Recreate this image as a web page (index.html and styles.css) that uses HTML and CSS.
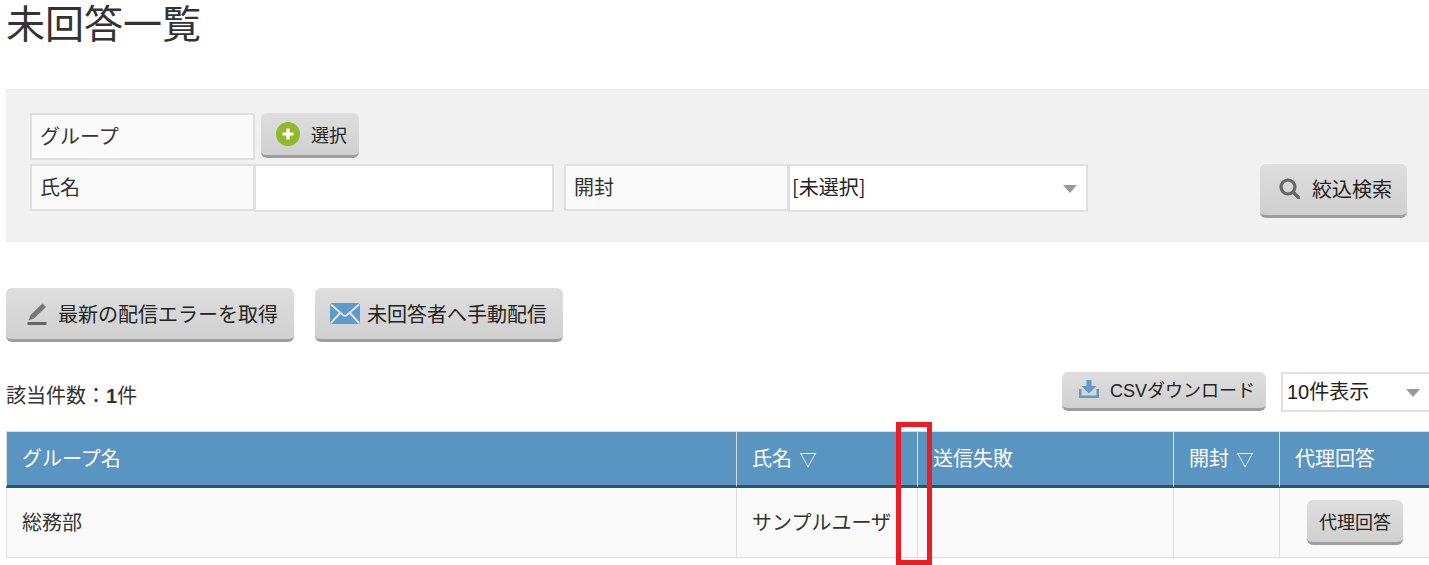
FILE: index.html
```html
<!DOCTYPE html>
<html lang="ja">
<head>
    <meta charset="UTF-8">
    <title>未回答一覧</title>
    <link rel="stylesheet" href="styles.css">
</head>
<body>
    <div class="page">
        <h1 class="page-title">未回答一覧</h1>

        <form class="search-panel">
            <div class="search-row">
                <div class="field-label">グループ</div>
                <button type="button" class="btn btn-select">
                    <svg class="icon" width="24" height="24" viewBox="0 0 24 24"><circle cx="12" cy="12" r="12" fill="#93b82a"/><path d="M12 6.500v11M6.500 12h11" stroke="#fff" stroke-width="3.200"/></svg>
                    選択
                </button>
            </div>
            <div class="search-row">
                <div class="field-label">氏名</div>
                <input type="text" class="field-input">
                <div class="field-label field-label-gap">開封</div>
                <div class="select-wrap select-open">
                    <select class="field-select"><option>[未選択]</option></select>
                </div>
                <button type="button" class="btn btn-search">
                    <svg class="icon" width="21" height="21" viewBox="0 0 21 21"><circle cx="9" cy="9" r="7" fill="none" stroke="#666" stroke-width="3.200"/><path d="M14 14l5.500 5.500" stroke="#666" stroke-width="3.400" stroke-linecap="round"/></svg>
                    絞込検索
                </button>
            </div>
        </form>

        <div class="actions">
            <button type="button" class="btn btn-fetch">
                <svg class="icon" width="20" height="22" viewBox="0 0 20 22"><path d="M15.500 0.500L19 4 7 15.500l-5.500 2 2-5.500z" fill="#777"/><rect x="0.500" y="19" width="19" height="3" fill="#666"/></svg>
                最新の配信エラーを取得
            </button>
            <button type="button" class="btn btn-mail">
                <svg class="icon" width="30" height="21" viewBox="0 0 30 21"><rect width="30" height="21" rx="2.500" fill="#5f9ac8"/><path d="M1 1.500L13 12q2 1.500 4 0L29 1.500M1 20L10.500 9.500M29 20L19.500 9.500" fill="none" stroke="#dbe6ee" stroke-width="2"/></svg>
                未回答者へ手動配信
            </button>
        </div>

        <div class="list-tools">
            <div class="result-count">該当件数：<strong>1</strong>件</div>
            <button type="button" class="btn btn-csv">
                <svg class="icon" width="20" height="18" viewBox="0 0 20 18"><path d="M7.500 0h5v6H17.500L10 13.500 2.500 6h5z" fill="#5f9ac8"/><path d="M1.250 9v7.750h17.500V9" fill="none" stroke="#5f9ac8" stroke-width="2.500"/></svg>
                CSVダウンロード
            </button>
            <div class="select-wrap select-count">
                <select class="field-select"><option>10件表示</option></select>
            </div>
        </div>

        <table class="result-table">
            <colgroup>
                <col class="col-group">
                <col class="col-name">
                <col class="col-fail">
                <col class="col-open">
                <col class="col-proxy">
            </colgroup>
            <thead>
                <tr>
                    <th>グループ名</th>
                    <th>氏名 <span class="sort-mark">▽</span></th>
                    <th>送信失敗</th>
                    <th>開封 <span class="sort-mark">▽</span></th>
                    <th>代理回答</th>
                </tr>
            </thead>
            <tbody>
                <tr>
                    <td>総務部</td>
                    <td>サンプルユーザ</td>
                    <td></td>
                    <td></td>
                    <td class="cell-proxy"><button type="button" class="btn btn-proxy">代理回答</button></td>
                </tr>
            </tbody>
        </table>
    </div>

    <div class="red-mark"></div>
</body>
</html>
```

FILE: styles.css
```css
html, body {
    overflow: hidden;
}
body {
    margin: 0;
    height: 565px;
    color: #333;
    font-family: "Liberation Sans", "Noto Sans CJK JP", sans-serif;
    font-size: 20px;
    background: #fff;
}
.page {
    width: 1440px;
    margin-left: 6px;
}
.page-title {
    margin: 0;
    height: 89px;
    font-size: 39px;
    font-weight: normal;
    line-height: 50px;
}

.search-panel {
    box-sizing: border-box;
    height: 153px;
    padding: 23px 38px 0 23px;
    background: #f1f1f1;
    border: 1px solid #ebebeb;
}
.search-row {
    display: flex;
    align-items: flex-start;
    margin-bottom: 4px;
}
.field-label {
    box-sizing: border-box;
    width: 225px;
    height: 47px;
    padding-left: 8px;
    background: #fafafa;
    border: 2px solid #e0e0e0;
    line-height: 44px;
}
.field-label-gap {
    margin-left: 10px;
}
.field-input {
    box-sizing: border-box;
    width: 300px;
    height: 48px;
    margin-left: -1px;
    background: #fff;
    border: 2px solid #e0e0e0;
}
.select-wrap {
    position: relative;
    box-sizing: border-box;
    height: 48px;
    background: #fff;
    border: 2px solid #e0e0e0;
}
.select-wrap::after {
    content: "";
    position: absolute;
    top: 19px;
    border-top: 8px solid #999;
    border-left: 7.500px solid transparent;
    border-right: 7.500px solid transparent;
}
.select-open {
    width: 300px;
    margin-left: -1px;
}
.select-open::after {
    right: 9px;
}
.select-open .field-select {
    padding: 0 3px 4px 2px;
    font-family: "Noto Sans CJK JP", sans-serif;
}
.select-count {
    width: 165px;
    height: 40px;
    margin-left: 15px;
}
.select-count::after {
    top: 15px;
    right: 24px;
}
.select-count .field-select {
    padding-left: 4px;
}
.field-select {
    box-sizing: border-box;
    width: 100%;
    height: 100%;
    padding: 0 3px;
    color: #222;
    font: inherit;
    background: transparent;
    border: none;
    appearance: none;
}

.btn {
    display: inline-flex;
    align-items: center;
    box-sizing: border-box;
    padding: 0 15px;
    color: #222;
    font: inherit;
    white-space: nowrap;
    background: linear-gradient(#dedede, #d0d0d0);
    border: none;
    border-bottom: 3px solid #9e9e9e;
    border-radius: 6px;
}
.btn-select {
    height: 45px;
    margin-left: 6px;
    padding: 0 12px 0 15px;
    font-size: 18px;
}
.btn-select .icon {
    margin-right: 11px;
}
.btn-search {
    height: 54px;
    margin-left: auto;
    padding: 0 15px 2px 19px;
}
.btn-search .icon {
    margin-right: 12px;
}

.actions {
    display: flex;
    gap: 21px;
    margin-top: 46px;
}
.btn-fetch,
.btn-mail {
    height: 54px;
    padding-right: 16px;
}
.btn-fetch {
    padding-left: 21px;
}
.btn-fetch .icon {
    margin-right: 11px;
}
.btn-mail .icon {
    margin-right: 7px;
}

.list-tools {
    display: flex;
    align-items: flex-start;
    height: 41px;
    margin-top: 30px;
}
.result-count {
    margin-right: auto;
    padding-top: 9px;
    line-height: 30px;
}
.btn-csv {
    height: 39px;
    padding: 0 11px 2px 17px;
    font-size: 18px;
}
.btn-csv .icon {
    margin-right: 11px;
}

.result-table {
    width: 1440px;
    margin-top: 18px;
    table-layout: fixed;
    border-collapse: separate;
    border-spacing: 0;
}
.col-group { width: 730px; }
.col-name { width: 181px; }
.col-fail { width: 256px; }
.col-open { width: 106px; }
.col-proxy { width: 167px; }

.result-table th {
    height: 57px;
    box-sizing: border-box;
    padding: 0 15px 2px;
    color: #fff;
    font-weight: normal;
    text-align: left;
    background: #5a94c1;
    border-top: 1px solid #ddd;
    border-left: 1px solid #ddd;
    border-bottom: 3px solid #2c5270;
}
.result-table td {
    height: 70px;
    box-sizing: border-box;
    padding: 0 15px 2px;
    background: #fafafa;
    border-left: 1px solid #ddd;
    border-bottom: 1px solid #ddd;
}
.result-table td.cell-proxy {
    padding-bottom: 0;
    white-space: nowrap;
}
.sort-mark {
    margin-left: 2px;
    font-size: 17px;
}
.btn-proxy {
    height: 45px;
    margin-left: 12px;
    padding: 0 12px;
    font-size: 18px;
}

.red-mark {
    position: absolute;
    left: 896px;
    top: 422px;
    box-sizing: border-box;
    width: 36px;
    height: 143px;
    border: 5px solid #ed1c24;
}
```
